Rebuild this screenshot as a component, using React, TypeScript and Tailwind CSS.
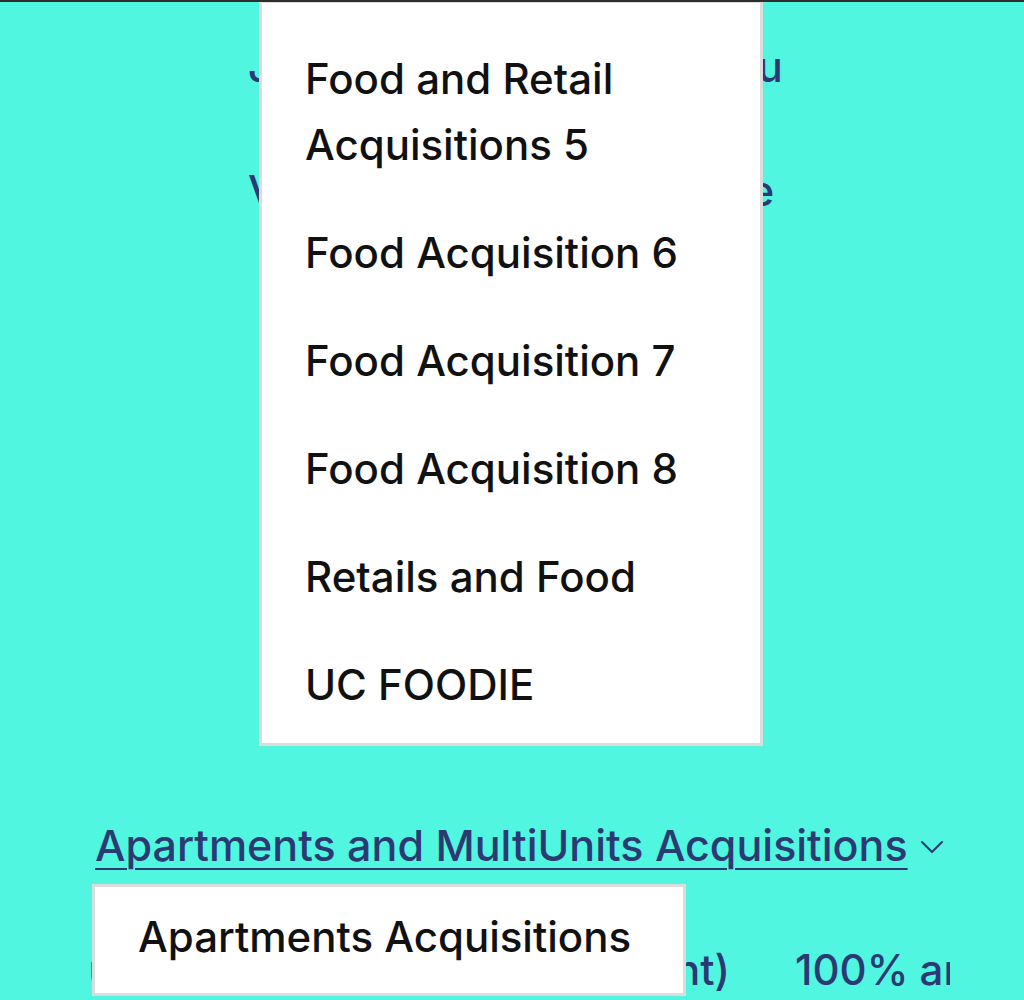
import { ChevronDown } from "lucide-react";

const foodItems = [
  "Food and Retail Acquisitions 5",
  "Food Acquisition 6",
  "Food Acquisition 7",
  "Food Acquisition 8",
  "Retails and Food",
  "UC FOODIE",
];

export default function App() {
  return (
    <div
      className="relative h-[1000px] w-full overflow-hidden border-t-2 border-[#2e2e2e] bg-[#50f6df] text-[#2b3a72]"
      style={{ fontFamily: "Inter, 'Noto Sans', sans-serif" }}
    >
      {/* page content behind the menus */}
      <div className="flex flex-col pl-[95px]">
        <div className="ml-[153px] mt-[42px] w-[537px] overflow-hidden whitespace-nowrap text-[42px] font-medium leading-[46px]">
          Juice Bars and Retail Acquisitions Acc
        </div>
        <div className="ml-[153px] mt-[78px] w-[537px] overflow-hidden whitespace-nowrap text-[42px] font-medium leading-[46px]">
          Vending and Food Service Acquisitions Inc
        </div>

        <div className="mt-[606px] flex items-center gap-[4px]">
          <a
            href="#"
            className="whitespace-nowrap text-[43px] font-medium leading-[50px] underline decoration-2 underline-offset-[7px]"
          >
            Apartments and MultiUnits Acquisitions
          </a>
          <ChevronDown className="mt-[4px] h-[40px] w-[40px]" strokeWidth={1.2} />
        </div>

        <div className="-ml-[20px] mt-[75px] flex w-[875px] gap-[65px] overflow-hidden whitespace-nowrap text-[42px] font-medium leading-[50px]">
          <div className="flex w-[655px] shrink-0 justify-end overflow-hidden">
            <span className="shrink-0">rental units (Joint Venture Investment)</span>
          </div>
          <span>100% and above</span>
        </div>
      </div>

      {/* open menu: food acquisitions */}
      <div className="absolute left-[259px] top-[-2px] w-[504px] border-[3px] border-[#dcdcdc] bg-white pb-[4px] pt-[22px]">
        {foodItems.map((item) => (
          <div
            key={item}
            className="px-[43px] py-[21px] text-[42px] font-medium leading-[66px] text-[#111111]"
          >
            {item}
          </div>
        ))}
      </div>

      {/* open menu: apartments */}
      <div className="absolute left-[92px] top-[882px] w-[594px] border-[3px] border-[#dcdcdc] bg-white pb-[30px] pt-[24px]">
        <div className="whitespace-nowrap px-[43px] text-[42px] font-medium leading-[52px] text-[#111111]">
          Apartments Acquisitions
        </div>
      </div>
    </div>
  );
}
